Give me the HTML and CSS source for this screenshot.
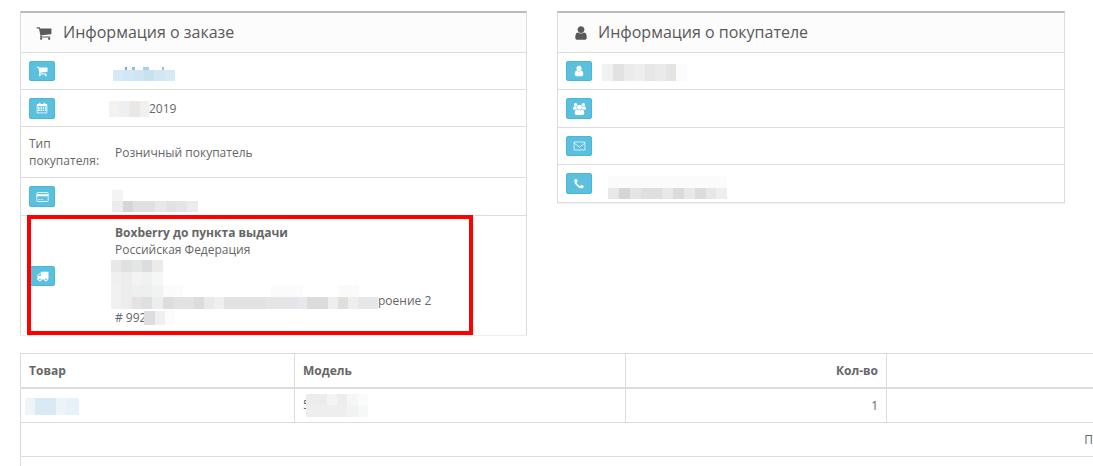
FILE: index.html
```html
<!DOCTYPE html>
<html lang="en">
<head>
  <meta charset="UTF-8" />
  <title>Заказ</title>
  <link rel="stylesheet" href="styles.css">
</head>
<body>

  <div class="info-panels">
    <div class="panel panel-order">
      <div class="panel-heading">
        <svg class="heading-icon" viewBox="0 0 1792 1792"><path d="M704 1536q0 52-38 90t-90 38-90-38-38-90 38-90 90-38 90 38 38 90zm896 0q0 52-38 90t-90 38-90-38-38-90 38-90 90-38 90 38 38 90zm128-1088v512q0 24-16.5 43.5t-40.5 22.5l-1044 122q13 60 13 70 0 16-24 64h920q26 0 45 19t19 45-19 45-45 19h-1024q-26 0-45-19t-19-45q0-11 8-31.5t16-36 21.5-40 15.5-29.5l-177-823h-204q-26 0-45-19t-19-45 19-45 45-19h256q16 0 28.5 6.5t19.5 15.5 13 24.5 8 26 5.5 29.5 4.5 26h1201q26 0 45 19t19 45z"/></svg>
        <h3>Информация о заказе</h3>
      </div>

      <div class="row row-37">
        <div class="label">
          <span class="btn"><svg viewBox="0 0 1792 1792"><path d="M704 1536q0 52-38 90t-90 38-90-38-38-90 38-90 90-38 90 38 38 90zm896 0q0 52-38 90t-90 38-90-38-38-90 38-90 90-38 90 38 38 90zm128-1088v512q0 24-16.5 43.5t-40.5 22.5l-1044 122q13 60 13 70 0 16-24 64h920q26 0 45 19t19 45-19 45-45 19h-1024q-26 0-45-19t-19-45q0-11 8-31.5t16-36 21.5-40 15.5-29.5l-177-823h-204q-26 0-45-19t-19-45 19-45 45-19h256q16 0 28.5 6.5t19.5 15.5 13 24.5 8 26 5.5 29.5 4.5 26h1201q26 0 45 19t19 45z"/></svg></span>
        </div>
        <div class="value"><span class="mosaic m-store"></span></div>
      </div>

      <div class="row row-37">
        <div class="label">
          <span class="btn btn-21"><svg viewBox="0 0 16 16"><path d="M1.5 3.5h13v11h-13zM4 1.5h1.500v3H4zM10.500 1.500H12v3h-1.500z" fill="none" stroke="#fff"/><path d="M1.500 2.500h13v3h-13zM2.500 7h2.500v2H2.500zM6 7h2v2H6zM9 7h2v2H9zM12 7h2v2h-2zM2.500 10h2.500v2H2.500zM6 10h2v2H6zM9 10h2v2H9zM12 10h2v2h-2z" fill="#fff"/></svg></span>
        </div>
        <div class="value"><span class="mosaic m-date"></span>2019</div>
      </div>

      <div class="row row-51">
        <div class="label">Тип покупателя:</div>
        <div class="value">Розничный покупатель</div>
      </div>

      <div class="row row-38">
        <div class="label">
          <span class="btn btn-21"><svg class="icon-wide" viewBox="0 0 16 14"><rect x="1" y="1.500" width="14" height="11" rx="1" fill="none" stroke="#fff"/><path d="M1 3.500h14v2.500H1zM3 9.500h2.500v1H3zM6.500 9.500h2v1h-2z" fill="#fff"/></svg></span>
        </div>
        <div class="value"><span class="mosaic m-payment"></span></div>
      </div>

      <div class="row row-shipping">
        <div class="label">
          <span class="btn"><svg class="icon-wide" viewBox="0 0 1792 1792"><path d="M640 1408q0-52-38-90t-90-38-90 38-38 90 38 90 90 38 90-38 38-90zm-384-512h384v-256h-158q-13 0-22 9l-195 195q-9 9-9 22v30zm1280 512q0-52-38-90t-90-38-90 38-38 90 38 90 90 38 90-38 38-90zm256-1088v1024q0 15-4 26.500t-13.500 18.500-16.500 11.500-23.500 6-22.500 2-25.500 0-22.500-.5q0 106-75 181t-181 75-181-75-75-181h-384q0 106-75 181t-181 75-181-75-75-181h-64q-3 0-22.500.5t-25.500 0-22.500-2-23.500-6-16.500-11.500-13.500-18.500-4-26.500q0-26 19-45t45-19v-320q0-8-.5-35t0-38 2.500-34.500 6.500-37 14-30.500 22.500-30l198-198q19-19 50.500-32t58.500-13h160v-192q0-26 19-45t45-19h1024q26 0 45 19t19 45z"/></svg></span>
        </div>
        <div class="value address">
          <div class="address-name">Boxberry до пункта выдачи</div>
          <div>Российская Федерация</div>
          <div class="address-street"><span class="mosaic m-street"></span><span>роение 2</span></div>
          <div class="address-code"># 992<span class="mosaic m-code"></span></div>
        </div>
        <div class="highlight"></div>
      </div>
    </div>

    <div class="panel panel-customer">
      <div class="panel-heading">
        <svg class="heading-icon" viewBox="0 0 1792 1792"><path d="M1536 1399q0 109-62.500 187t-150.500 78h-854q-88 0-150.500-78t-62.500-187q0-85 8.500-160.500t31.500-152 58.500-131 94-89 134.500-34.500q131 128 313 128t313-128q76 0 134.500 34.500t94 89 58.500 131 31.500 152 8.500 160.500zm-256-887q0 159-112.500 271.500t-271.500 112.500-271.500-112.500-112.500-271.500 112.500-271.500 271.500-112.500 271.500 112.500 112.500 271.500z"/></svg>
        <h3>Информация о покупателе</h3>
      </div>

      <div class="row row-37">
        <div class="label label-narrow">
          <span class="btn"><svg viewBox="0 0 1792 1792"><path d="M1536 1399q0 109-62.500 187t-150.500 78h-854q-88 0-150.500-78t-62.500-187q0-85 8.500-160.500t31.500-152 58.500-131 94-89 134.500-34.500q131 128 313 128t313-128q76 0 134.500 34.500t94 89 58.500 131 31.500 152 8.500 160.500zm-256-887q0 159-112.500 271.500t-271.500 112.500-271.500-112.500-112.500-271.500 112.500-271.500 271.500-112.500 271.500 112.500 112.500 271.500z"/></svg></span>
        </div>
        <div class="value"><span class="mosaic m-name"></span></div>
      </div>

      <div class="row row-38">
        <div class="label label-narrow">
          <span class="btn btn-21"><svg class="icon-wide" viewBox="0 0 1920 1792"><path d="M593 896q-162 5-265 128h-134q-82 0-138-40.500t-56-118.500q0-353 124-353 6 0 43.500 21t97.500 42.500 119 21.500q67 0 133-23-5 37-5 66 0 139 81 256zm1071 637q0 120-73 189.500t-194 69.500h-874q-121 0-194-69.500t-73-189.500q0-53 3.500-103.500t14-109 26.500-108.500 43-97.500 62-81 85.500-53.500 111.500-20q10 0 43 21.500t73 48 107 48 135 21.500 135-21.500 107-48 73-48 43-21.500q61 0 111.500 20t85.500 53.500 62 81 43 97.500 26.500 108.500 14 109 3.500 103.500zm-1024-1277q0 106-75 181t-181 75-181-75-75-181 75-181 181-75 181 75 75 181zm704 384q0 159-112.500 271.500t-271.500 112.500-271.500-112.500-112.500-271.500 112.500-271.500 271.500-112.500 271.500 112.500 112.500 271.500zm576 225q0 78-56 118.500t-138 40.500h-134q-103-123-265-128 81-117 81-256 0-29-5-66 66 23 133 23 59 0 119-21.500t97.500-42.500 43.500-21q124 0 124 353zm-128-609q0 106-75 181t-181 75-181-75-75-181 75-181 181-75 181 75 75 181z"/></svg></span>
        </div>
        <div class="value"></div>
      </div>

      <div class="row row-37">
        <div class="label label-narrow">
          <span class="btn"><svg class="icon-wide" viewBox="0 0 18 16"><path d="M1.500 2.500h15v11h-15z" fill="none" stroke="#fff"/><path d="M1.500 4l7.500 5.500L16.500 4" fill="none" stroke="#fff"/></svg></span>
        </div>
        <div class="value"></div>
      </div>

      <div class="row row-37">
        <div class="label label-narrow">
          <span class="btn btn-21"><svg viewBox="0 0 1792 1792"><path d="M1600 1240q0 27-10 70.500t-21 68.500q-21 50-122 106-94 51-186 51-27 0-53-3.500t-57.500-12.500-47-14.500-55.500-20.500-49-18q-98-35-175-83-127-79-264-216t-216-264q-48-77-83-175-3-9-18-49t-20.500-55.500-14.500-47-12.500-57.500-3.500-53q0-92 51-186 56-101 106-122 25-11 68.500-21t70.500-10q14 0 21 3 18 6 53 76 11 19 30 54t35 63.500 31 53.500q3 4 17.500 25t21.500 35.500 7 28.500q0 20-28.500 50t-62 55-62 53-28.500 46q0 9 5 22.500t8.500 20.500 14 24 11.500 19q76 137 174 235t235 174q2 1 19 11.500t24 14 20.500 8.500 22.500 5q18 0 46-28.500t53-62 55-62 50-28.500q14 0 28.500 7t35.500 21.500 25 17.500q25 15 53.500 31t63.500 35 54 30q70 35 76 53 3 7 3 21z"/></svg></span>
        </div>
        <div class="value"><span class="mosaic m-phone"></span></div>
      </div>
    </div>
  </div>

  <table class="products">
    <colgroup>
      <col class="col-product">
      <col class="col-model">
      <col class="col-qty">
      <col class="col-price">
      <col>
    </colgroup>
    <thead>
      <tr>
        <th>Товар</th>
        <th>Модель</th>
        <th class="right">Кол-во</th>
        <th></th>
        <th></th>
      </tr>
    </thead>
    <tbody>
      <tr>
        <td><span class="mosaic m-product"></span></td>
        <td class="model-cell">5<span class="mosaic m-model"></span></td>
        <td class="right">1</td>
        <td></td>
        <td></td>
      </tr>
      <tr>
        <td colspan="4" class="right">П</td>
        <td></td>
      </tr>
      <tr>
        <td colspan="4"></td>
        <td></td>
      </tr>
    </tbody>
  </table>

</body>
</html>
```

FILE: styles.css
```css
html, body {
  height: 100%;
  overflow: hidden;
}

body {
  margin: 0;
  background: #fff;
  font-family: 'Open Sans', sans-serif;
  font-size: 12px;
  line-height: 17px;
  color: #666;
}

.info-panels {
  display: flex;
  gap: 30px;
  padding: 11px 0 0 20px;
}

.panel {
  width: 507px;
  box-sizing: border-box;
  border: 1px solid #ddd;
  border-top: 2px solid #bbb;
}

.panel-order {
  border-bottom-color: #eee;
}

.panel-customer {
  width: 508px;
  align-self: flex-start;
  box-shadow: 0 1px 1px rgba(0, 0, 0, 0.05);
}

.panel-heading {
  display: flex;
  align-items: center;
  height: 40px;
  box-sizing: border-box;
  background: #fcfcfc;
  border-bottom: 1px solid #ddd;
  padding-left: 15px;
}

.heading-icon {
  width: 16px;
  height: 16px;
  fill: #595959;
  margin-right: 11px;
}

.panel-customer .heading-icon {
  margin-right: 9px;
}

h3 {
  margin: 0;
  font-size: 16px;
  font-weight: 400;
  color: #595959;
}

.row {
  display: flex;
  align-items: center;
  position: relative;
  box-sizing: border-box;
  border-bottom: 1px solid #ddd;
}

.row:last-child {
  border-bottom: none;
}

.row-37 { height: 37px; }
.row-38 { height: 38px; }
.row-51 { height: 51px; }
.row-shipping { height: 119px; }

.label {
  width: 78px;
  padding: 0 0 0 8px;
  flex-shrink: 0;
  margin-right: 8px;
}

.label-narrow {
  width: 27px;
  margin-right: 6px;
}

.btn {
  display: flex;
  align-items: center;
  justify-content: center;
  width: 26px;
  height: 20px;
  box-sizing: border-box;
  background: #5bc0de;
  border: 1px solid #46b8da;
  border-radius: 2px;
}

.btn-21 {
  height: 21px;
}

.btn svg {
  width: 12px;
  height: 12px;
  fill: #fff;
}

.btn svg.icon-wide {
  width: 13px;
  height: 12px;
}

.value {
  flex: 1;
  display: flex;
  align-items: center;
}

.address {
  display: block;
  align-self: flex-start;
  padding-top: 8px;
}

.address-name {
  font-weight: 700;
}

.address-street {
  display: flex;
  align-items: flex-end;
  height: 51px;
}

.address-code {
  display: flex;
  align-items: center;
}

.highlight {
  position: absolute;
  left: 6px;
  top: -1px;
  width: 446px;
  height: 120px;
  box-sizing: border-box;
  border: 4px solid #f00;
}

/* blurred-out data, each one painted as blocks */
.mosaic {
  display: inline-block;
  flex-shrink: 0;
  background-repeat: no-repeat;
}

.m-store {
  width: 62px;
  height: 14px;
  margin: 6px 0 0 -2px;
  background-image:
    linear-gradient(90deg, transparent 0 12px, #6fb3dc 0 14px, transparent 0 19px, #8cc3e4 0 22px, transparent 0 30px, #a9d2ea 0 36px, transparent 0 49px, #8cc3e4 0 51px, transparent 0),
    linear-gradient(90deg, #d6e9f4 0 10px, #d2e6f3 0 21px, #cfe5f2 0 31px, #c8e1f0 0 41px, #d2e6f3 0 52px, #d7e9f4 0);
  background-size: 100% 3px, 100% 11px;
  background-position: 0 0, 0 3px;
}

.m-date {
  width: 40px;
  height: 16px;
  margin: 2px 0 0 -6px;
  background-image: linear-gradient(90deg, #f3f2f1 0 10px, #eeeff0 0 20px, #e9e8e7 0 31px, #f1f0ef 0);
}

.m-payment {
  width: 86px;
  height: 22px;
  margin: 9px 0 0 -3px;
  background-image:
    linear-gradient(90deg, #f4f4f4 0 11px, transparent 0),
    linear-gradient(90deg, #ececec 0 11px, #d6d6d6 0 21px, #e0e0e0 0 43px, #e8e8e8 0 54px, #e2e2e2 0 64px, #e4e5e6 0 75px, #ebebeb 0);
  background-size: 100% 11px, 100% 11px;
  background-position: 0 0, 0 11px;
}

.m-name {
  width: 85px;
  height: 17px;
  margin: 3px 0 0 3px;
  background-image: linear-gradient(90deg, #f1f1f1 0 11px, #e2e2e2 0 22px, #ebebeb 0 32px, #edeeee 0 43px, #e6e6e6 0 53px, #eaeaea 0 64px, #e5e4e3 0 74px, #fafbfd 0);
}

.m-phone {
  width: 119px;
  height: 23px;
  margin: 7px 0 0 9px;
  background-image:
    linear-gradient(90deg, #fbfbfb 0 100%),
    linear-gradient(90deg, #e9e8e6 0 11px, #d3d5d6 0 22px, #e6e5e3 0 33px, #dfdfdf 0 54px, #e8e8e6 0 65px, #dcdbd9 0 76px, #e8e8e8 0 87px, #dadcdf 0 98px, #e8e7e5 0 108px, #eceef0 0);
  background-size: 100% 12px, 100% 11px;
  background-position: 0 0, 0 12px;
}

.m-street {
  width: 267px;
  height: 49px;
  margin-left: -4px;
  background-image:
    linear-gradient(90deg, #e9e8e6 0 10px, #e0e0e0 0 21px, #e4e6e6 0 31px, #dcdde0 0 41px, #ecebea 0 52px, transparent 0),
    linear-gradient(90deg, #f0f0f0 0 10px, #ececec 0 21px, #f3f3f3 0 31px, #f0f1f1 0 41px, #f6f6f6 0 52px, transparent 0),
    linear-gradient(90deg, #f1f1f1 0 10px, #ececec 0 21px, #eef0f0 0 41px, #f1f2f2 0 52px, #fbfbfb 0 72px, #fff 0 160px, #fbfbfb 0 192px, #fff 0 228px, #fafafa 0 248px, #fff 0),
    linear-gradient(90deg, #f1f1f1 0 10px, #ececec 0 21px, #e4e3e1 0 31px, #dfdfdf 0 41px, #ebedef 0 52px, #dedddb 0 62px, #e2e2e2 0 83px, #dcdcda 0 93px, #e8eaea 0 103px, #efefef 0 113px, #e3e2e0 0 134px, #e0e2e3 0 155px, #e6e5e3 0 165px, #e3e5e8 0 186px, #e7e8ea 0 196px, #dadbdc 0 217px, #eeeeec 0 227px, #e0dfdc 0 237px, #eeeeef 0 247px, #e5e7ea 0);
  background-size: 100% 12px, 100% 13px, 100% 12px, 100% 12px;
  background-position: 0 0, 0 12px, 0 25px, 0 37px;
}

.m-code {
  width: 31px;
  height: 14px;
  margin-left: -2px;
  background-image: linear-gradient(90deg, #dcdde0 0 11px, #efefef 0 21px, #fbfbfb 0);
}

.m-product {
  width: 54px;
  height: 17px;
  margin-left: -4px;
  vertical-align: middle;
  background-image: linear-gradient(90deg, #eef4f9 0 10px, #d9eaf5 0 31px, #ecf4f9 0 42px, #e6f1f8 0);
}

.model-cell {
  white-space: nowrap;
}

.m-model {
  width: 62px;
  height: 23px;
  margin: 0 0 0 -4px;
  vertical-align: middle;
  background-image:
    linear-gradient(90deg, #ececec 0 21px, #f4f4f4 0 31px, #ededef 0 41px, #f6f6f4 0 52px, #fafbfd 0),
    linear-gradient(90deg, #eeeeee 0 41px, #f2f2f2 0 52px, #f5f7f9 0);
  background-size: 100% 11px, 100% 12px;
  background-position: 0 0, 0 11px;
}

.products {
  table-layout: fixed;
  width: 1400px;
  margin: 17px 0 0 20px;
  border-collapse: collapse;
}

.col-product { width: 274px; }
.col-model { width: 331px; }
.col-qty { width: 261px; }
.col-price { width: 215px; }

.products th,
.products td {
  height: 33px;
  padding: 0 8px;
  box-sizing: content-box;
  border: 1px solid #ddd;
  text-align: left;
}

.products th {
  font-weight: 700;
  border-bottom: 2px solid #ddd;
}

.products .right {
  text-align: right;
}
```
